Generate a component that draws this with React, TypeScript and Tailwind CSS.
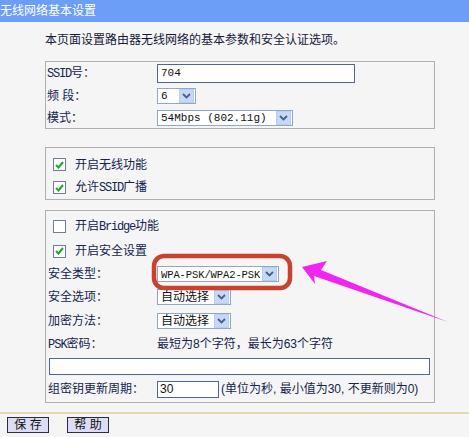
type Kids = { children?: React.ReactNode; className?: string }

// 等宽的拉丁字符 (SSID, Bridge, 54Mbps ...)
function M({ children, className = "" }: Kids) {
  return <span className={`font-['Liberation_Mono',monospace] ${className}`}>{children}</span>
}

function DropBtn() {
  return (
    <span className="flex h-[14px] w-[15px] shrink-0 items-center justify-center border border-[#b9cdee] bg-[#c5d8f8]">
      <svg width="9" height="6" viewBox="0 0 9 6">
        <path d="M1 1l3.5 3.5L8 1" stroke="#4a5f86" strokeWidth="1.8" fill="none" />
      </svg>
    </span>
  )
}

function Select({ children, className = "" }: Kids) {
  return (
    <div className={`flex h-[16px] items-center justify-between border border-[#8fa6c4] bg-white pl-[3px] pr-[1px] text-[#111] ${className}`}>
      <span className="overflow-hidden whitespace-nowrap leading-[14px]">{children}</span>
      <DropBtn />
    </div>
  )
}

function Check({ on }: { on: boolean }) {
  return (
    <span className="flex h-[13px] w-[13px] items-center justify-center border border-[#6f7f8f] bg-white">
      {on && (
        <svg width="9" height="8" viewBox="0 0 9 8">
          <path d="M1 4l2.5 2.5L8 1" stroke="#21a32c" strokeWidth="2" fill="none" />
        </svg>
      )}
    </span>
  )
}

function CheckRow({ on, children, className = "" }: Kids & { on: boolean }) {
  return (
    <div className={`flex items-center pl-[7px] ${className}`}>
      <Check on={on} />
      <span className="ml-[9px] leading-[14px]">{children}</span>
    </div>
  )
}

function Row({ label, children, className = "", pad = "pl-[1px]" }: Kids & { label: React.ReactNode; pad?: string }) {
  return (
    <div className={`flex items-center ${className}`}>
      <div className={`w-[111px] shrink-0 leading-[14px] ${pad}`}>{label}</div>
      {children}
    </div>
  )
}

export default function App() {
  return (
    <div className="relative h-[437px] w-[469px] overflow-hidden bg-[#f5f5f5] font-['Liberation_Sans','Noto_Sans_CJK_SC',sans-serif] text-[12px] text-[#14234f]">
      {/* 标题 */}
      <div className="h-[22px] bg-[#6c9df7] text-[12px] leading-[22px] text-white">无线网络基本设置</div>

      <div className="w-[435px] pl-[45px]">
        <div className="mt-[10px] h-[16px] leading-[16px] text-[#15183a]">本页面设置路由器无线网络的基本参数和安全认证选项。</div>

        {/* 基本参数 */}
        <div className="mt-[13px] border border-[#b0b0b0]">
          <Row label={<><M className="text-[12px] tracking-[-1.2px]">SSID</M>号：</>} className="h-[22px]">
            <div className="flex h-[19px] w-[198px] items-center border border-[#4f6690] bg-white pl-[3px] text-[#111]">
              <M className="text-[11px]">704</M>
            </div>
          </Row>
          <Row label="频 段：" className="h-[23px]">
            <Select className="w-[39px]"><M className="text-[11px]">6</M></Select>
          </Row>
          <Row label="模式：" className="h-[21px]">
            <Select className="w-[136px]"><M className="text-[11px]">54Mbps (802.11g)</M></Select>
          </Row>
        </div>

        {/* 无线功能 */}
        <div className="mt-[18px] border border-[#b0b0b0] pt-[5px]">
          <CheckRow on className="h-[23px]">开启无线功能</CheckRow>
          <CheckRow on className="h-[23px]">允许<M className="text-[12px] tracking-[-1.2px]">SSID</M>广播</CheckRow>
        </div>

        {/* 安全设置 */}
        <div className="mt-[10px] border border-[#b0b0b0] pb-[1px] pr-[4px] pt-[2px]">
          <CheckRow on={false} className="h-[26px]">开启<M className="text-[12px] tracking-[-1.2px]">Bridge</M>功能</CheckRow>
          <CheckRow on className="h-[24px]">开启安全设置</CheckRow>
          <Row label="安全类型：" pad="pl-[2px]" className="h-[22px]">
            <Select className="w-[122px]"><M className="text-[10.5px] tracking-[-0.1px]">WPA-PSK/WPA2-PSK</M></Select>
          </Row>
          <Row label="安全选项：" pad="pl-[2px]" className="h-[24px]">
            <Select className="w-[74px]">自动选择</Select>
          </Row>
          <Row label="加密方法：" pad="pl-[2px]" className="h-[24px]">
            <Select className="w-[74px]">自动选择</Select>
          </Row>
          <Row label={<><M className="text-[12px] tracking-[-1px]">PSK</M>密码：</>} pad="pl-[2px]" className="h-[22px]">
            <span className="leading-[14px]">最短为8个字符，最长为63个字符</span>
          </Row>
          <div className="flex h-[22px] items-center pl-[3px]">
            <div className="h-[17px] w-full border border-[#4f6690] bg-white" />
          </div>
          <Row label="组密钥更新周期：" pad="pl-[2px]" className="h-[24px]">
            <div className="flex h-[17px] w-[62px] items-center border border-[#4f6690] bg-white pl-[2px] text-[#111]">30</div>
            <span className="ml-[2px] leading-[14px]">(单位为秒, 最小值为30, 不更新则为0)</span>
          </Row>
        </div>
      </div>

      <div className="mt-[9px] h-[2px] bg-[#e6d6b6]" />
      <div className="mt-[3px] flex gap-[18px] pl-[7px]">
        <button className="h-[16px] w-[42px] border border-[#2c2c3c] bg-[#dcdcf4] text-[12px] leading-[14px] text-[#111]">保 存</button>
        <button className="h-[16px] w-[42px] border border-[#2c2c3c] bg-[#dcdcf4] text-[12px] leading-[14px] text-[#111]">帮 助</button>
      </div>

      {/* 标注：红框和箭头 */}
      <svg className="pointer-events-none absolute left-0 top-0" width="469" height="437" viewBox="0 0 469 437">
        <rect x="154" y="256" width="136" height="32" rx="10" fill="none" stroke="#c7432f" strokeWidth="4.5" />
        <polygon points="302,267 327,261 321,270 448,322 314,276 315,284" fill="#f224f0" />
      </svg>
    </div>
  )
}
